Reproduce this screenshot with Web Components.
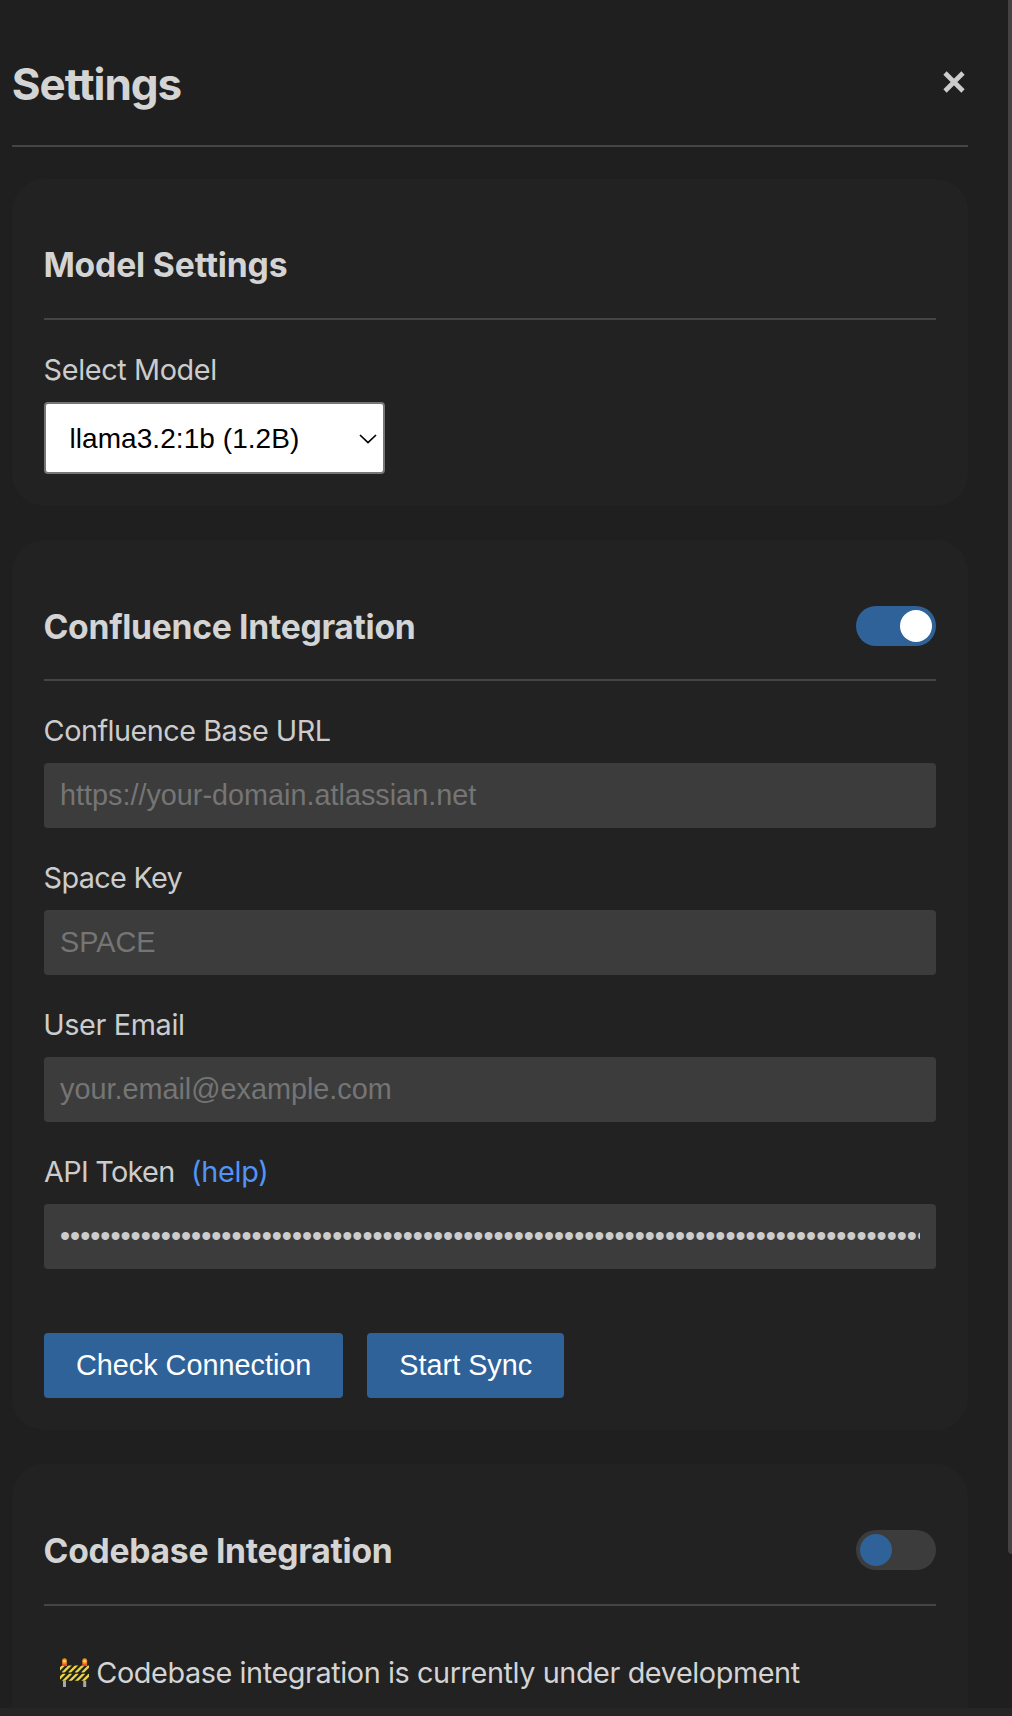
<!DOCTYPE html>
<html lang="en">
<head>
<meta charset="utf-8">
<title>Settings</title>
<style>
  html, body { margin: 0; height: 1716px; overflow: hidden; background: #1f1f1f; }
  body { font-family: Inter, "Liberation Sans", sans-serif; color: #ccc; }
</style>
</head>
<body>
<settings-panel>
  <settings-header slot="header"></settings-header>
  <settings-section heading="Model Settings" ink="45.4 286.7">
    <settings-field label="Select Model" ink="44.6 215.2">
      <model-select>llama3.2:1b (1.2B)</model-select>
    </settings-field>
  </settings-section>
  <settings-section heading="Confluence Integration" ink="44.5 413.8" toggle="on" style="--shift:2px">
    <settings-field label="Confluence Base URL" ink="44.6 329.7"><text-input placeholder="https://your-domain.atlassian.net"></text-input></settings-field>
    <settings-field label="Space Key" ink="44.6 182.6"><text-input placeholder="SPACE"></text-input></settings-field>
    <settings-field label="User Email" ink="45.2 183"><text-input placeholder="your.email@example.com"></text-input></settings-field>
    <settings-field label="API Token" ink="44 173.2" help><text-input type="password"></text-input></settings-field>
    <button-row><action-button>Check Connection</action-button><action-button>Start Sync</action-button></button-row>
  </settings-section>
  <settings-section heading="Codebase Integration" ink="44.5 390.8" toggle="off" style="--head:108px;--shift:2px">
    <dev-notice></dev-notice>
  </settings-section>
</settings-panel>
<script>
const define = (name, html, setup) => customElements.define(name, class extends HTMLElement {
  connectedCallback() {
    if (this.shadowRoot) return;
    const root = this.attachShadow({ mode: 'open' });
    root.innerHTML = html;
    if (setup) setup.call(this, root);
  }
});

// One line of text tracked so that its ink runs between two page x positions.
// "from" is the x of the box itself.
define('tracked-text', `<style>:host{display:block;white-space:nowrap;font-kerning:normal}</style><span></span>`, function (root) {
  const span = root.querySelector('span'), text = this.getAttribute('text');
  span.textContent = text;
  const [x0, x1] = this.getAttribute('ink').split(' ').map(Number);
  const cs = getComputedStyle(this);
  const ctx = document.createElement('canvas').getContext('2d');
  ctx.font = `${cs.fontWeight} ${cs.fontSize} ${cs.fontFamily}`;
  const m = ctx.measureText(text);
  const ink = m.actualBoundingBoxRight + m.actualBoundingBoxLeft;
  span.style.letterSpacing = ((x1 - x0 - ink) / (text.length - 1)).toFixed(3) + 'px';
  span.style.marginLeft = (x0 - Number(this.getAttribute('from')) + m.actualBoundingBoxLeft).toFixed(2) + 'px';
});

define('settings-panel', `<style>
  :host{display:flex;height:1716px;flex-direction:column;position:relative;overflow:hidden}
  main{flex:1;min-height:0;overflow:hidden;padding:0 44px 0 12px}
  .list{display:flex;flex-direction:column;gap:34px;padding-top:32px}
  .thumb{position:absolute;right:-4px;top:-8px;width:8px;height:1562px;border-radius:4px;background:#424242}
  footer{height:8px;background:#252525;position:relative}
</style><main><slot name="header"></slot><div class="list"><slot></slot></div></main><footer></footer><div class="thumb"></div>`);

define('settings-header', `<style>
  :host{display:flex;justify-content:space-between;height:147px;box-sizing:border-box;border-bottom:2px solid #454545;padding-top:58px}
  tracked-text{font-size:44px;font-weight:700;line-height:53px;color:#d4d4d4}
  svg{width:22px;height:22px;margin:13px 3px 0 0}
</style><tracked-text text="Settings" ink="12.8 181.6" from="12"></tracked-text>
<svg viewBox="0 0 22 22" role="img" aria-label="Close"><path d="M2 2L20 20M20 2L2 20" stroke="#ccc" stroke-width="4.6"/></svg>`);

define('settings-section', `<style>
  :host{display:block;background:#222;border-radius:32px;padding:32px}
  header{display:flex;align-items:center;justify-content:space-between;height:var(--head,107px);border-bottom:2px solid #454545}
  tracked-text{font-size:33.7px;font-weight:700;line-height:42px;color:#d4d4d4;padding-top:var(--shift,0)}
</style><header></header><slot></slot>`, function (root) {
  const t = this.getAttribute('toggle');
  root.querySelector('header').innerHTML =
    `<tracked-text text="${this.getAttribute('heading')}" ink="${this.getAttribute('ink')}" from="44"></tracked-text>` +
    (t ? `<toggle-switch class="${t}"></toggle-switch>` : '');
});

define('toggle-switch', `<style>
  :host{display:flex;box-sizing:border-box;width:80px;height:40px;border-radius:20px;padding:4px;background:#3c3c3c}
  :host(.on){justify-content:flex-end;background:#2e6299}
  i{width:32px;height:32px;border-radius:50%;background:#2e6299}
  :host(.on) i{background:#fff}
</style><i></i>`);

define('settings-field', `<style>
  :host{display:block;padding-top:32px}
  .label{display:flex;height:35px;margin-bottom:15px;font-size:28.8px;line-height:35px}
  .label tracked-text{width:149.8px}
  .label .help{color:#5194f8}
</style><div class="label"></div><slot></slot>`, function (root) {
  root.querySelector('.label').innerHTML =
    `<tracked-text text="${this.getAttribute('label')}" ink="${this.getAttribute('ink')}" from="44"></tracked-text>` +
    (this.hasAttribute('help') ? `<tracked-text class="help" text="(help)" ink="194 266.3" from="193.8"></tracked-text>` : '');
});

define('model-select', `<style>
  :host{display:flex;box-sizing:border-box;width:341px;height:72px;border:2px solid #767676;border-radius:4px;background:#fff;color:#000;
    align-items:center;justify-content:space-between;padding:1px 5px 0 23.5px;font:28px "Liberation Sans",sans-serif;letter-spacing:.06px}
  svg{width:20px;height:12px}
</style><span><slot></slot></span><svg viewBox="0 0 20 12"><path d="M2 2L10 9.500L18 2" fill="none" stroke="#000" stroke-width="1.700"/></svg>`);

define('text-input', `<style>
  :host{display:flex}
  input{flex:1;min-width:0;height:65px;box-sizing:border-box;border:0;border-radius:4px;background:#3c3c3c;color:#ccc;padding:0 16px;font:28.8px "Liberation Sans",sans-serif}
  input::placeholder{color:#757575;opacity:1}
</style><input>`, function (root) {
  const input = root.querySelector('input');
  input.placeholder = this.getAttribute('placeholder') || '';
  if (this.getAttribute('type') === 'password') { input.type = 'password'; input.value = 'x'.repeat(120); }
});

define('button-row', `<style>:host{display:flex;gap:24px;margin-top:64px}</style><slot></slot>`);
define('action-button', `<style>
  button{display:block;height:65px;border:0;border-radius:4px;background:#2e6299;color:#fff;padding:0 32px;font:28.8px "Liberation Sans",sans-serif}
</style><button><slot></slot></button>`);

define('dev-notice', `<style>
  :host{display:flex;align-items:center;height:180px;box-sizing:border-box;padding:49px 0 95px 15px;font-size:28.8px;line-height:36px;color:#d4d4d4}
  svg{width:30px;height:30px;flex:none}
</style>
<svg viewBox="0 0 30 30" role="img" aria-label="Construction">
  <defs><clipPath id="b"><rect x="1" y="7.5" width="29" height="7"/><rect x="1" y="15.8" width="29" height="7"/></clipPath></defs>
  <path d="M4 22h3v7H4zM24.200 22h3v7h-3z" fill="#a5a7aa"/>
  <rect x="1" y="7.500" width="29" height="7" fill="#24231d"/><rect x="1" y="15.800" width="29" height="7" fill="#24231d"/>
  <path clip-path="url(#b)" d="M-3 15L6 6M3.500 15L12.500 6M10 15L19 6M16.500 15L25.500 6M23 15L32 6M-3 24L6 15M3.500 24L12.500 15M10 24L19 15M16.500 24L25.500 15M23 24L32 15" stroke="#e8d548" stroke-width="2.400"/>
  <path d="M3 5h5v3H3zM23.200 5h5v3h-5z" fill="#e8532c"/>
  <ellipse cx="5.500" cy="3.200" rx="2.500" ry="3" fill="#f78a1d"/><ellipse cx="25.700" cy="3.200" rx="2.500" ry="3" fill="#f78a1d"/>
  <circle cx="5.500" cy="3.200" r="1.300" fill="#ffdc55"/><circle cx="25.700" cy="3.200" r="1.300" fill="#ffdc55"/>
</svg>
<tracked-text text="Codebase integration is currently under development" ink="97.3 799.700" from="89"></tracked-text>`);
</script>
</body>
</html>
